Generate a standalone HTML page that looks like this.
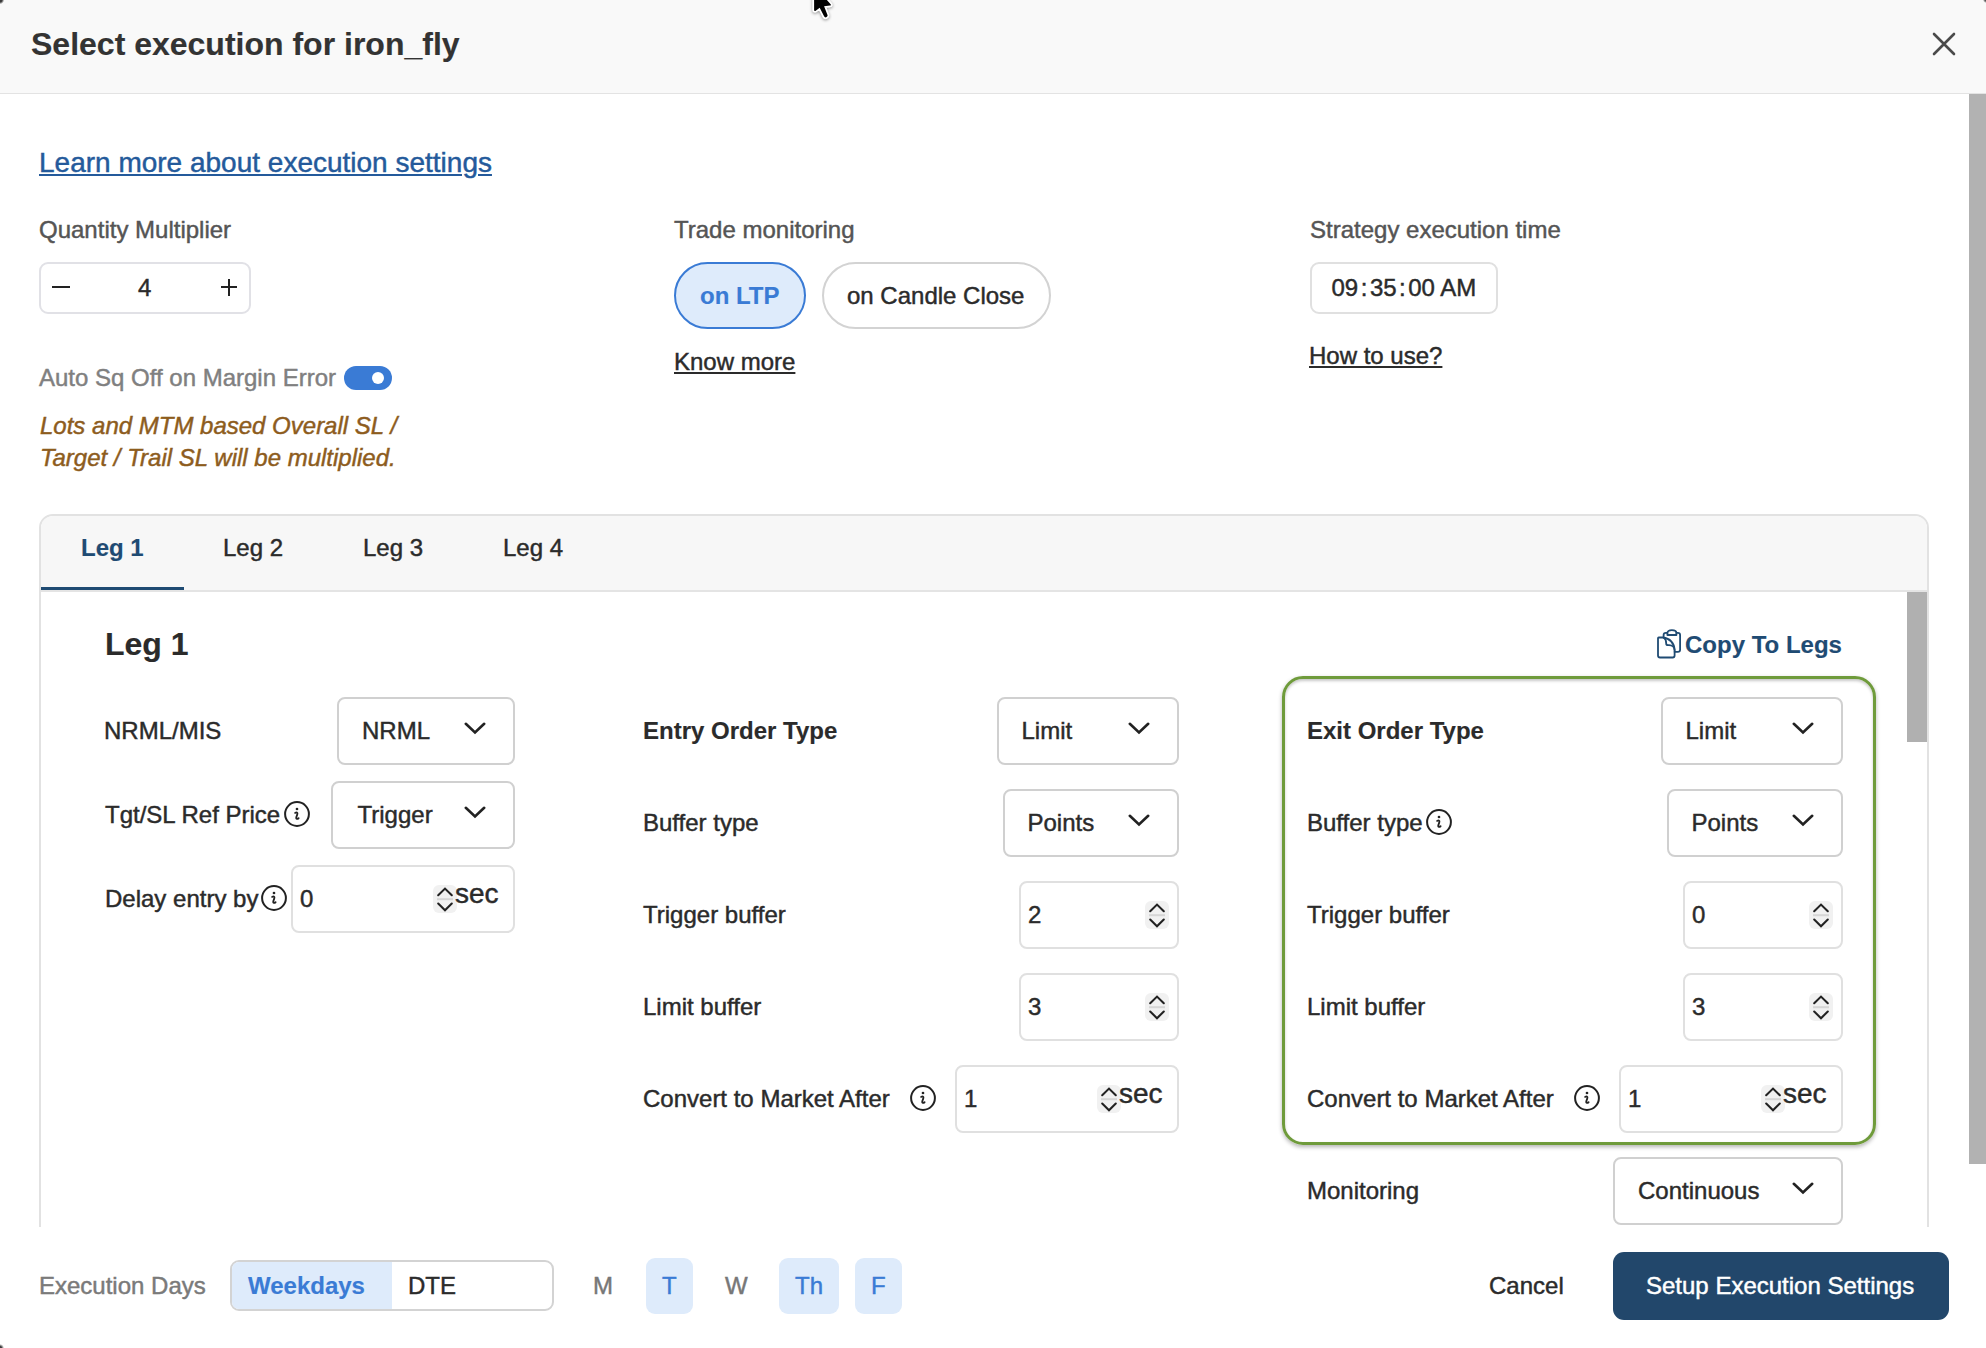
<!DOCTYPE html>
<html><head><meta charset="utf-8"><style>
html,body{margin:0;padding:0;}
body{width:1986px;height:1348px;position:relative;overflow:hidden;background:#fff;font-family:"Liberation Sans",sans-serif;}
.r{position:absolute;}
.t{position:absolute;white-space:nowrap;color:#222;-webkit-text-stroke:0.45px currentColor;}
.dk{color:#2b2b2b;}
.bold{font-weight:bold;-webkit-text-stroke-width:0.15px;}
.it{font-style:italic;}
.ul{text-decoration:underline;text-decoration-thickness:2px;text-underline-offset:2px;}
.c{margin:0 2.5px;}
</style></head><body>
<div class="r" style="left:0px;top:0px;width:1986px;height:93px;background:#f9f9f9;border-bottom:1px solid #e3e3e3"></div>
<div class="t bold" style="left:31px;top:28.11px;font-size:32px;line-height:32px;color:#333">Select execution for iron_fly</div>
<svg class="r" style="left:1928px;top:28px" width="32" height="32" viewBox="0 0 32 32"><path d="M6 6 L26 26 M26 6 L6 26" stroke="#4a4a4a" stroke-width="2.6" stroke-linecap="round"/></svg>
<div class="r" style="left:1969px;top:94px;width:17px;height:1070px;background:#b2b2b2"></div>
<div class="t ul" style="left:39px;top:148.99px;font-size:28px;line-height:28px;color:#245a9b">Learn more about execution settings</div>
<div class="t " style="left:39px;top:218.18px;font-size:24px;line-height:24px;color:#555">Quantity Multiplier</div>
<div class="t " style="left:674px;top:218.18px;font-size:24px;line-height:24px;color:#555">Trade monitoring</div>
<div class="t " style="left:1310px;top:218.18px;font-size:24px;line-height:24px;color:#555">Strategy execution time</div>
<div class="r" style="left:39px;top:262px;width:212px;height:52px;border:2px solid #e1e1e6;border-radius:9px;box-sizing:border-box"></div>
<div class="r" style="left:52px;top:286px;width:18px;height:2px;background:#222"></div>
<div class="r" style="left:221px;top:286px;width:16px;height:2px;background:#222"></div>
<div class="r" style="left:228px;top:279px;width:2px;height:17px;background:#222"></div>
<div class="t dk" style="left:138px;top:276.18px;font-size:24px;line-height:24px;">4</div>
<div class="r" style="left:674px;top:262px;width:132px;height:67px;border:2px solid #3a7bd5;border-radius:34px;box-sizing:border-box;background:#deebfb"></div>
<div class="t bold" style="left:700px;top:283.88px;font-size:24px;line-height:24px;color:#3a7bd5">on LTP</div>
<div class="r" style="left:822px;top:262px;width:229px;height:67px;border:2px solid #d3d3d3;border-radius:34px;box-sizing:border-box;background:#fff"></div>
<div class="t dk" style="left:847px;top:283.88px;font-size:24px;line-height:24px;">on Candle Close</div>
<div class="t ul dk" style="left:674px;top:349.98px;font-size:24px;line-height:24px;">Know more</div>
<div class="r" style="left:1310px;top:262px;width:188px;height:52px;border:2px solid #e0e0e0;border-radius:9px;box-sizing:border-box"></div>
<div class="t dk" style="left:1331.5px;top:276.18px;font-size:24px;line-height:24px;">09<span class="c">:</span>35<span class="c">:</span>00 AM</div>
<div class="t ul dk" style="left:1309px;top:343.88px;font-size:24px;line-height:24px;">How to use?</div>
<div class="t " style="left:39px;top:365.78px;font-size:24px;line-height:24px;color:#808080">Auto Sq Off on Margin Error</div>
<div class="r" style="left:344px;top:366px;width:48px;height:24px;background:#3a7bd5;border-radius:12px"></div>
<div class="r" style="left:372px;top:372px;width:12px;height:12px;background:#fff;border-radius:6px"></div>
<div class="t it" style="left:40px;top:413.68px;font-size:24px;line-height:24px;color:#8d5c1d">Lots and MTM based Overall SL /</div>
<div class="t it" style="left:40px;top:445.68px;font-size:24px;line-height:24px;color:#8d5c1d">Target / Trail SL will be multiplied.</div>
<div class="r" style="left:39px;top:514px;width:1890px;height:900px;border:2px solid #e2e2e2;border-radius:14px;box-sizing:border-box;background:#fff;overflow:hidden"></div>
<div class="r" style="left:41px;top:516px;width:1886px;height:74px;background:#f7f7f7;border-radius:12px 12px 0 0"></div>
<div class="r" style="left:41px;top:590px;width:1886px;height:2px;background:#e4e4e4"></div>
<div class="r" style="left:41px;top:587px;width:143px;height:3px;background:#1f4b73"></div>
<div class="t bold" style="left:81px;top:536.18px;font-size:24px;line-height:24px;color:#1f4b73">Leg 1</div>
<div class="t dk" style="left:223px;top:536.18px;font-size:24px;line-height:24px;">Leg 2</div>
<div class="t dk" style="left:363px;top:536.18px;font-size:24px;line-height:24px;">Leg 3</div>
<div class="t dk" style="left:503px;top:536.18px;font-size:24px;line-height:24px;">Leg 4</div>
<div class="r" style="left:1907px;top:592px;width:20px;height:150px;background:#b0b0b0"></div>
<div class="t bold" style="left:105px;top:628.11px;font-size:32px;line-height:32px;color:#2b2b2b">Leg 1</div>
<svg class="r" style="left:1655px;top:628px" width="28" height="32" viewBox="0 0 28 32"><g fill="none" stroke="#1f4b73" stroke-width="1.8" stroke-linejoin="round" stroke-linecap="round">
<path d="M8.6 9.5 V7 Q8.6 4.8 10.8 4.8 H12.4 M21.4 4.8 H22.9 Q25.1 4.8 25.1 7 V21.7 Q25.1 23.8 22.9 23.8 H19.6"/>
<path d="M12.4 7 V5 Q12.4 2.2 16.9 2.2 Q21.4 2.2 21.4 5 V7 Z"/>
<path d="M3 10.2 Q3 9.5 3.7 9.5 H7.8 Q18.8 11 19.6 22 V27.5 Q19.6 29.5 17.6 29.5 H5 Q3 29.5 3 27.5 Z"/>
<path d="M9.2 10 Q11.2 11.5 11.2 15.5 Q11.2 17.2 13 17.2 H14 Q19.3 17.5 19.6 22"/>
</g></svg>
<div class="t bold" style="left:1685px;top:633.38px;font-size:24px;line-height:24px;color:#1f4b73">Copy To Legs</div>
<div class="t dk" style="left:104px;top:719.18px;font-size:24px;line-height:24px;">NRML/MIS</div>
<div class="r" style="left:337px;top:697px;width:178px;height:68px;border:2px solid #d0d0d0;border-radius:8px;box-sizing:border-box;background:#fff"></div>
<div class="t dk" style="left:362px;top:719.18px;font-size:24px;line-height:24px;">NRML</div>
<div class="r" style="left:464px;top:721.4px;width:22px;height:13px"><svg width="22" height="13" viewBox="0 0 22 13"><path d="M1.8 1.8 L11 10.5 L20.2 1.8" fill="none" stroke="#222" stroke-width="2.6" stroke-linecap="round" stroke-linejoin="miter"/></svg></div>
<div class="t dk" style="left:105px;top:803.18px;font-size:24px;line-height:24px;">Tgt/SL Ref Price</div>
<div class="r" style="left:284px;top:801px;width:26px;height:26px"><svg width="26" height="26" viewBox="0 0 26 26"><circle cx="13" cy="13" r="11.9" fill="none" stroke="#222" stroke-width="2"/><circle cx="13" cy="8" r="1.35" fill="#222"/><path d="M11.1 11.9 Q12.6 10.9 13.3 11.9 Q13.6 12.5 13.2 13.6 L12.3 16.3 Q11.9 17.8 13 17.9 Q13.8 17.9 14.6 17.2" fill="none" stroke="#222" stroke-width="1.8" stroke-linecap="round"/></svg></div>
<div class="r" style="left:331px;top:781px;width:184px;height:68px;border:2px solid #d0d0d0;border-radius:8px;box-sizing:border-box;background:#fff"></div>
<div class="t dk" style="left:357.5px;top:803.18px;font-size:24px;line-height:24px;">Trigger</div>
<div class="r" style="left:464px;top:805.4px;width:22px;height:13px"><svg width="22" height="13" viewBox="0 0 22 13"><path d="M1.8 1.8 L11 10.5 L20.2 1.8" fill="none" stroke="#222" stroke-width="2.6" stroke-linecap="round" stroke-linejoin="miter"/></svg></div>
<div class="t dk" style="left:105px;top:887.18px;font-size:24px;line-height:24px;">Delay entry by</div>
<div class="r" style="left:261px;top:885px;width:26px;height:26px"><svg width="26" height="26" viewBox="0 0 26 26"><circle cx="13" cy="13" r="11.9" fill="none" stroke="#222" stroke-width="2"/><circle cx="13" cy="8" r="1.35" fill="#222"/><path d="M11.1 11.9 Q12.6 10.9 13.3 11.9 Q13.6 12.5 13.2 13.6 L12.3 16.3 Q11.9 17.8 13 17.9 Q13.8 17.9 14.6 17.2" fill="none" stroke="#222" stroke-width="1.8" stroke-linecap="round"/></svg></div>
<div class="r" style="left:291px;top:865px;width:224px;height:68px;border:2px solid #e0e0e0;border-radius:8px;box-sizing:border-box;background:#fff"></div>
<div class="t dk" style="left:300px;top:887.18px;font-size:24px;line-height:24px;">0</div>
<div class="r" style="left:433px;top:885px;width:24px;height:28px;background:#f1f1f1;border-radius:6px"><svg width="24" height="28" viewBox="0 0 24 28" style="position:absolute;left:0;top:0"><path d="M5.2 10.2 L12 3.6 L18.8 10.2" fill="none" stroke="#222" stroke-width="2.1" stroke-linecap="round"/><path d="M4 14.2 L20 14.2" stroke="#d6d6d6" stroke-width="2"/><path d="M5.2 18.6 L12 25.2 L18.8 18.6" fill="none" stroke="#222" stroke-width="2.1" stroke-linecap="round"/></svg></div>
<div class="t dk" style="left:455px;top:879.79px;font-size:28px;line-height:28px;">sec</div>
<div class="t bold" style="left:643px;top:719.18px;font-size:24px;line-height:24px;color:#2b2b2b">Entry Order Type</div>
<div class="r" style="left:997px;top:697px;width:182px;height:68px;border:2px solid #d0d0d0;border-radius:8px;box-sizing:border-box;background:#fff"></div>
<div class="t dk" style="left:1021.5px;top:719.18px;font-size:24px;line-height:24px;">Limit</div>
<div class="r" style="left:1128px;top:721.4px;width:22px;height:13px"><svg width="22" height="13" viewBox="0 0 22 13"><path d="M1.8 1.8 L11 10.5 L20.2 1.8" fill="none" stroke="#222" stroke-width="2.6" stroke-linecap="round" stroke-linejoin="miter"/></svg></div>
<div class="t dk" style="left:643px;top:811.18px;font-size:24px;line-height:24px;">Buffer type</div>
<div class="r" style="left:1003px;top:789px;width:176px;height:68px;border:2px solid #d0d0d0;border-radius:8px;box-sizing:border-box;background:#fff"></div>
<div class="t dk" style="left:1027.5px;top:811.18px;font-size:24px;line-height:24px;">Points</div>
<div class="r" style="left:1128px;top:813.4px;width:22px;height:13px"><svg width="22" height="13" viewBox="0 0 22 13"><path d="M1.8 1.8 L11 10.5 L20.2 1.8" fill="none" stroke="#222" stroke-width="2.6" stroke-linecap="round" stroke-linejoin="miter"/></svg></div>
<div class="t dk" style="left:643px;top:903.18px;font-size:24px;line-height:24px;">Trigger buffer</div>
<div class="r" style="left:1019px;top:881px;width:160px;height:68px;border:2px solid #e0e0e0;border-radius:8px;box-sizing:border-box;background:#fff"></div>
<div class="t dk" style="left:1028px;top:903.18px;font-size:24px;line-height:24px;">2</div>
<div class="r" style="left:1145px;top:901px;width:24px;height:28px;background:#f1f1f1;border-radius:6px"><svg width="24" height="28" viewBox="0 0 24 28" style="position:absolute;left:0;top:0"><path d="M5.2 10.2 L12 3.6 L18.8 10.2" fill="none" stroke="#222" stroke-width="2.1" stroke-linecap="round"/><path d="M4 14.2 L20 14.2" stroke="#d6d6d6" stroke-width="2"/><path d="M5.2 18.6 L12 25.2 L18.8 18.6" fill="none" stroke="#222" stroke-width="2.1" stroke-linecap="round"/></svg></div>
<div class="t dk" style="left:643px;top:995.18px;font-size:24px;line-height:24px;">Limit buffer</div>
<div class="r" style="left:1019px;top:973px;width:160px;height:68px;border:2px solid #e0e0e0;border-radius:8px;box-sizing:border-box;background:#fff"></div>
<div class="t dk" style="left:1028px;top:995.18px;font-size:24px;line-height:24px;">3</div>
<div class="r" style="left:1145px;top:993px;width:24px;height:28px;background:#f1f1f1;border-radius:6px"><svg width="24" height="28" viewBox="0 0 24 28" style="position:absolute;left:0;top:0"><path d="M5.2 10.2 L12 3.6 L18.8 10.2" fill="none" stroke="#222" stroke-width="2.1" stroke-linecap="round"/><path d="M4 14.2 L20 14.2" stroke="#d6d6d6" stroke-width="2"/><path d="M5.2 18.6 L12 25.2 L18.8 18.6" fill="none" stroke="#222" stroke-width="2.1" stroke-linecap="round"/></svg></div>
<div class="t dk" style="left:643px;top:1087.18px;font-size:24px;line-height:24px;">Convert to Market After</div>
<div class="r" style="left:910px;top:1085px;width:26px;height:26px"><svg width="26" height="26" viewBox="0 0 26 26"><circle cx="13" cy="13" r="11.9" fill="none" stroke="#222" stroke-width="2"/><circle cx="13" cy="8" r="1.35" fill="#222"/><path d="M11.1 11.9 Q12.6 10.9 13.3 11.9 Q13.6 12.5 13.2 13.6 L12.3 16.3 Q11.9 17.8 13 17.9 Q13.8 17.9 14.6 17.2" fill="none" stroke="#222" stroke-width="1.8" stroke-linecap="round"/></svg></div>
<div class="r" style="left:955px;top:1065px;width:224px;height:68px;border:2px solid #e0e0e0;border-radius:8px;box-sizing:border-box;background:#fff"></div>
<div class="t dk" style="left:964px;top:1087.18px;font-size:24px;line-height:24px;">1</div>
<div class="r" style="left:1097px;top:1085px;width:24px;height:28px;background:#f1f1f1;border-radius:6px"><svg width="24" height="28" viewBox="0 0 24 28" style="position:absolute;left:0;top:0"><path d="M5.2 10.2 L12 3.6 L18.8 10.2" fill="none" stroke="#222" stroke-width="2.1" stroke-linecap="round"/><path d="M4 14.2 L20 14.2" stroke="#d6d6d6" stroke-width="2"/><path d="M5.2 18.6 L12 25.2 L18.8 18.6" fill="none" stroke="#222" stroke-width="2.1" stroke-linecap="round"/></svg></div>
<div class="t dk" style="left:1119px;top:1079.79px;font-size:28px;line-height:28px;">sec</div>
<div class="t bold" style="left:1307px;top:719.18px;font-size:24px;line-height:24px;color:#2b2b2b">Exit Order Type</div>
<div class="r" style="left:1661px;top:697px;width:182px;height:68px;border:2px solid #d0d0d0;border-radius:8px;box-sizing:border-box;background:#fff"></div>
<div class="t dk" style="left:1685.5px;top:719.18px;font-size:24px;line-height:24px;">Limit</div>
<div class="r" style="left:1792px;top:721.4px;width:22px;height:13px"><svg width="22" height="13" viewBox="0 0 22 13"><path d="M1.8 1.8 L11 10.5 L20.2 1.8" fill="none" stroke="#222" stroke-width="2.6" stroke-linecap="round" stroke-linejoin="miter"/></svg></div>
<div class="t dk" style="left:1307px;top:811.18px;font-size:24px;line-height:24px;">Buffer type</div>
<div class="r" style="left:1667px;top:789px;width:176px;height:68px;border:2px solid #d0d0d0;border-radius:8px;box-sizing:border-box;background:#fff"></div>
<div class="t dk" style="left:1691.5px;top:811.18px;font-size:24px;line-height:24px;">Points</div>
<div class="r" style="left:1792px;top:813.4px;width:22px;height:13px"><svg width="22" height="13" viewBox="0 0 22 13"><path d="M1.8 1.8 L11 10.5 L20.2 1.8" fill="none" stroke="#222" stroke-width="2.6" stroke-linecap="round" stroke-linejoin="miter"/></svg></div>
<div class="t dk" style="left:1307px;top:903.18px;font-size:24px;line-height:24px;">Trigger buffer</div>
<div class="r" style="left:1683px;top:881px;width:160px;height:68px;border:2px solid #e0e0e0;border-radius:8px;box-sizing:border-box;background:#fff"></div>
<div class="t dk" style="left:1692px;top:903.18px;font-size:24px;line-height:24px;">0</div>
<div class="r" style="left:1809px;top:901px;width:24px;height:28px;background:#f1f1f1;border-radius:6px"><svg width="24" height="28" viewBox="0 0 24 28" style="position:absolute;left:0;top:0"><path d="M5.2 10.2 L12 3.6 L18.8 10.2" fill="none" stroke="#222" stroke-width="2.1" stroke-linecap="round"/><path d="M4 14.2 L20 14.2" stroke="#d6d6d6" stroke-width="2"/><path d="M5.2 18.6 L12 25.2 L18.8 18.6" fill="none" stroke="#222" stroke-width="2.1" stroke-linecap="round"/></svg></div>
<div class="t dk" style="left:1307px;top:995.18px;font-size:24px;line-height:24px;">Limit buffer</div>
<div class="r" style="left:1683px;top:973px;width:160px;height:68px;border:2px solid #e0e0e0;border-radius:8px;box-sizing:border-box;background:#fff"></div>
<div class="t dk" style="left:1692px;top:995.18px;font-size:24px;line-height:24px;">3</div>
<div class="r" style="left:1809px;top:993px;width:24px;height:28px;background:#f1f1f1;border-radius:6px"><svg width="24" height="28" viewBox="0 0 24 28" style="position:absolute;left:0;top:0"><path d="M5.2 10.2 L12 3.6 L18.8 10.2" fill="none" stroke="#222" stroke-width="2.1" stroke-linecap="round"/><path d="M4 14.2 L20 14.2" stroke="#d6d6d6" stroke-width="2"/><path d="M5.2 18.6 L12 25.2 L18.8 18.6" fill="none" stroke="#222" stroke-width="2.1" stroke-linecap="round"/></svg></div>
<div class="t dk" style="left:1307px;top:1087.18px;font-size:24px;line-height:24px;">Convert to Market After</div>
<div class="r" style="left:1574px;top:1085px;width:26px;height:26px"><svg width="26" height="26" viewBox="0 0 26 26"><circle cx="13" cy="13" r="11.9" fill="none" stroke="#222" stroke-width="2"/><circle cx="13" cy="8" r="1.35" fill="#222"/><path d="M11.1 11.9 Q12.6 10.9 13.3 11.9 Q13.6 12.5 13.2 13.6 L12.3 16.3 Q11.9 17.8 13 17.9 Q13.8 17.9 14.6 17.2" fill="none" stroke="#222" stroke-width="1.8" stroke-linecap="round"/></svg></div>
<div class="r" style="left:1619px;top:1065px;width:224px;height:68px;border:2px solid #e0e0e0;border-radius:8px;box-sizing:border-box;background:#fff"></div>
<div class="t dk" style="left:1628px;top:1087.18px;font-size:24px;line-height:24px;">1</div>
<div class="r" style="left:1761px;top:1085px;width:24px;height:28px;background:#f1f1f1;border-radius:6px"><svg width="24" height="28" viewBox="0 0 24 28" style="position:absolute;left:0;top:0"><path d="M5.2 10.2 L12 3.6 L18.8 10.2" fill="none" stroke="#222" stroke-width="2.1" stroke-linecap="round"/><path d="M4 14.2 L20 14.2" stroke="#d6d6d6" stroke-width="2"/><path d="M5.2 18.6 L12 25.2 L18.8 18.6" fill="none" stroke="#222" stroke-width="2.1" stroke-linecap="round"/></svg></div>
<div class="t dk" style="left:1783px;top:1079.79px;font-size:28px;line-height:28px;">sec</div>
<div class="r" style="left:1426px;top:809px;width:26px;height:26px"><svg width="26" height="26" viewBox="0 0 26 26"><circle cx="13" cy="13" r="11.9" fill="none" stroke="#222" stroke-width="2"/><circle cx="13" cy="8" r="1.35" fill="#222"/><path d="M11.1 11.9 Q12.6 10.9 13.3 11.9 Q13.6 12.5 13.2 13.6 L12.3 16.3 Q11.9 17.8 13 17.9 Q13.8 17.9 14.6 17.2" fill="none" stroke="#222" stroke-width="1.8" stroke-linecap="round"/></svg></div>
<div class="r" style="left:1282px;top:676px;width:594px;height:469px;border:3px solid #6f9b3b;border-radius:21px;box-sizing:border-box;box-shadow:0 2px 4px rgba(0,0,0,.3), inset 0 2px 3px rgba(0,0,0,.22)"></div>
<div class="t dk" style="left:1307px;top:1179.18px;font-size:24px;line-height:24px;">Monitoring</div>
<div class="r" style="left:1613px;top:1157px;width:230px;height:68px;border:2px solid #d0d0d0;border-radius:8px;box-sizing:border-box;background:#fff"></div>
<div class="t dk" style="left:1638px;top:1179.18px;font-size:24px;line-height:24px;">Continuous</div>
<div class="r" style="left:1792px;top:1181.4px;width:22px;height:13px"><svg width="22" height="13" viewBox="0 0 22 13"><path d="M1.8 1.8 L11 10.5 L20.2 1.8" fill="none" stroke="#222" stroke-width="2.6" stroke-linecap="round" stroke-linejoin="miter"/></svg></div>
<div class="r" style="left:0px;top:1227px;width:1969px;height:121px;background:#fff"></div>
<div class="t " style="left:39px;top:1274.18px;font-size:24px;line-height:24px;color:#7a7a7a">Execution Days</div>
<div class="r" style="left:230px;top:1260px;width:324px;height:51px;border:2px solid #d3d3d3;border-radius:9px;box-sizing:border-box;overflow:hidden"></div>
<div class="r" style="left:232px;top:1262px;width:160px;height:47px;background:#deebfb;border-radius:7px 0 0 7px"></div>
<div class="t bold" style="left:248px;top:1274.18px;font-size:24px;line-height:24px;color:#3a7bd5">Weekdays</div>
<div class="t dk" style="left:408px;top:1274.18px;font-size:24px;line-height:24px;">DTE</div>
<div class="t " style="left:593px;top:1274.18px;font-size:24px;line-height:24px;color:#777">M</div>
<div class="r" style="left:646px;top:1258px;width:47px;height:56px;background:#deebfb;border-radius:9px"></div>
<div class="t " style="left:662px;top:1274.18px;font-size:24px;line-height:24px;color:#3a7bd5">T</div>
<div class="t " style="left:725px;top:1274.18px;font-size:24px;line-height:24px;color:#777">W</div>
<div class="r" style="left:779px;top:1258px;width:60px;height:56px;background:#deebfb;border-radius:9px"></div>
<div class="t " style="left:795px;top:1274.18px;font-size:24px;line-height:24px;color:#3a7bd5">Th</div>
<div class="r" style="left:855px;top:1258px;width:47px;height:56px;background:#deebfb;border-radius:9px"></div>
<div class="t " style="left:871px;top:1274.18px;font-size:24px;line-height:24px;color:#3a7bd5">F</div>
<div class="t dk" style="left:1489px;top:1273.78px;font-size:24px;line-height:24px;">Cancel</div>
<div class="r" style="left:1613px;top:1252px;width:336px;height:68px;background:#22476b;border-radius:11px"></div>
<div class="t " style="left:1646px;top:1273.78px;font-size:24px;line-height:24px;color:#fff">Setup Execution Settings</div>
<div class="r" style="left:0px;top:0px;width:6px;height:6px;background:radial-gradient(circle at 0 0, #3a3a3a 0, #3a3a3a 2px, rgba(58,58,58,0) 4.2px)"></div>
<div class="r" style="left:0px;top:1342px;width:6px;height:6px;background:radial-gradient(circle at 0 100%, #3a3a3a 0, #3a3a3a 1.5px, rgba(58,58,58,0) 4px)"></div>
<div class="r" style="left:1982px;top:0px;width:4px;height:4px;background:radial-gradient(circle at 100% 0, #555 0, #555 1px, rgba(85,85,85,0) 3px)"></div>
<svg class="r" style="left:805px;top:-20px;filter:drop-shadow(0 1.5px 1.5px rgba(0,0,0,.4))" width="40" height="50" viewBox="0 0 40 50"><path d="M9.1 5.2 L9.1 30 Q9.1 31.3 10.4 30.9 L14.7 27.8 L19.2 36.6 Q20.2 38 21.6 37 Q22.9 36.2 22.5 34.9 L19.1 26.3 L24.9 25.6 Q26.4 25.3 25.6 24.3 Z" fill="#000" stroke="#fff" stroke-width="3.6" stroke-linejoin="round" paint-order="stroke"/></svg>
</body></html>
